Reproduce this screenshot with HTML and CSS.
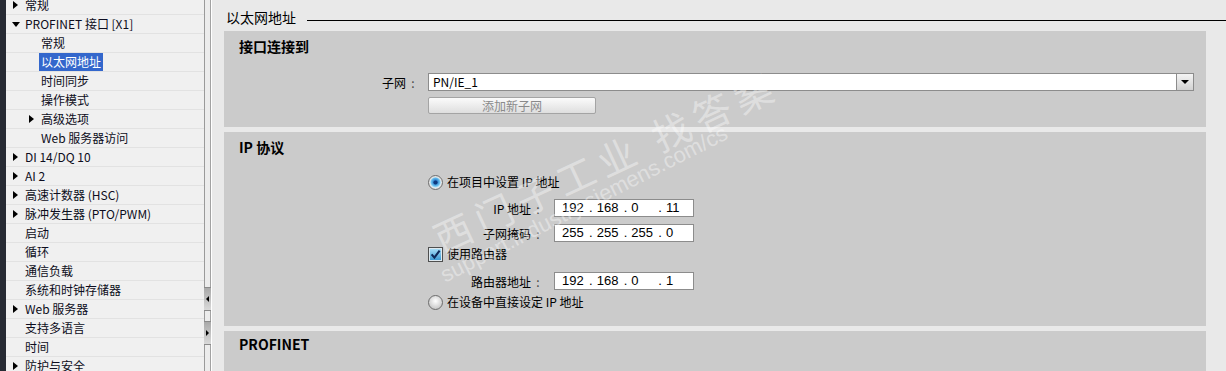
FILE: index.html
```html
<!DOCTYPE html>
<html lang="zh">
<head>
<meta charset="utf-8">
<title>以太网地址</title>
<link rel="stylesheet" href="styles.css">
</head>
<body>
<div class="app">
  <div class="edge"></div>
  <aside class="tree">
    <ul class="tree-list">
      <li class="row l0"><span class="tw closed"></span><span class="lbl">常规</span></li>
      <li class="row l0"><span class="tw open"></span><span class="lbl">PROFINET 接口 [X1]</span></li>
      <li class="row l1"><span class="tw"></span><span class="lbl">常规</span></li>
      <li class="row l1"><span class="tw"></span><span class="lbl sel">以太网地址</span></li>
      <li class="row l1"><span class="tw"></span><span class="lbl">时间同步</span></li>
      <li class="row l1"><span class="tw"></span><span class="lbl">操作模式</span></li>
      <li class="row l1"><span class="tw closed"></span><span class="lbl">高级选项</span></li>
      <li class="row l1"><span class="tw"></span><span class="lbl">Web 服务器访问</span></li>
      <li class="row l0"><span class="tw closed"></span><span class="lbl">DI 14/DQ 10</span></li>
      <li class="row l0"><span class="tw closed"></span><span class="lbl">AI 2</span></li>
      <li class="row l0"><span class="tw closed"></span><span class="lbl">高速计数器 (HSC)</span></li>
      <li class="row l0"><span class="tw closed"></span><span class="lbl">脉冲发生器 (PTO/PWM)</span></li>
      <li class="row l0"><span class="tw"></span><span class="lbl">启动</span></li>
      <li class="row l0"><span class="tw"></span><span class="lbl">循环</span></li>
      <li class="row l0"><span class="tw"></span><span class="lbl">通信负载</span></li>
      <li class="row l0"><span class="tw"></span><span class="lbl">系统和时钟存储器</span></li>
      <li class="row l0"><span class="tw closed"></span><span class="lbl">Web 服务器</span></li>
      <li class="row l0"><span class="tw"></span><span class="lbl">支持多语言</span></li>
      <li class="row l0"><span class="tw"></span><span class="lbl">时间</span></li>
      <li class="row l0"><span class="tw closed"></span><span class="lbl">防护与安全</span></li>
    </ul>
  </aside>
  <div class="splitter">
    <div class="split-btn"><span class="arr-l"></span></div>
    <div class="split-btn"><span class="arr-r"></span></div>
  </div>
  <main class="main">
    <div class="title-row"><h1 class="title">以太网地址</h1><span class="title-rule"></span></div>

    <section class="panel p1">
      <h2 class="panel-h">接口连接到</h2>
      <div class="field-row first">
        <label class="flabel">子网<span class="colon">:</span></label>
        <div class="combo"><span class="combo-val">PN/IE_1</span><span class="combo-btn"></span></div>
      </div>
      <div class="btn-row"><button class="btn" disabled>添加新子网</button></div>
    </section>

    <section class="panel p2">
      <h2 class="panel-h">IP 协议</h2>
      <div class="opts">
        <div class="opt">
          <svg class="radio" width="15" height="15" viewBox="0 0 15 15">
            <defs>
              <radialGradient id="rbl" cx="0.5" cy="0.45" r="0.55">
                <stop offset="0.25" stop-color="#2a74c4"/>
                <stop offset="0.7" stop-color="#66c0f0"/>
                <stop offset="1" stop-color="#d8f0fc"/>
              </radialGradient>
            </defs>
            <circle cx="7.5" cy="7.5" r="7" fill="#e4e4e4" stroke="#6c6c6c"/>
            <circle cx="7.5" cy="7.5" r="5.3" fill="url(#rbl)"/>
            <circle cx="7.5" cy="7.5" r="2.1" fill="#0e3a7e"/>
          </svg>
          <span>在项目中设置 IP 地址</span>
        </div>
        <div class="ip-row r-ip">
          <label class="iplabel">IP 地址<span class="colon">:</span></label>
          <div class="ip"><span class="seg">192</span><span class="dot">.</span><span class="seg">168</span><span class="dot">.</span><span class="seg">0</span><span class="dot">.</span><span class="seg">11</span></div>
        </div>
        <div class="ip-row r-mask">
          <label class="iplabel">子网掩码<span class="colon">:</span></label>
          <div class="ip"><span class="seg">255</span><span class="dot">.</span><span class="seg">255</span><span class="dot">.</span><span class="seg">255</span><span class="dot">.</span><span class="seg">0</span></div>
        </div>
        <div class="opt r-chk">
          <svg class="check" width="15" height="15" viewBox="0 0 15 15">
            <defs>
              <linearGradient id="cbg" x1="0" y1="0" x2="0" y2="1">
                <stop offset="0" stop-color="#a6dcf6"/>
                <stop offset="1" stop-color="#3d9ad4"/>
              </linearGradient>
            </defs>
            <rect x="0.5" y="0.5" width="14" height="14" fill="#dfe9ef" stroke="#4f4f4f"/>
            <rect x="2" y="2" width="11" height="11" fill="url(#cbg)"/>
            <path d="M3.6 7.4 L6.4 10.6 L11.6 3.6" fill="none" stroke="#0f2858" stroke-width="2.1"/>
          </svg>
          <span>使用路由器</span>
        </div>
        <div class="ip-row r-router">
          <label class="iplabel">路由器地址<span class="colon">:</span></label>
          <div class="ip"><span class="seg">192</span><span class="dot">.</span><span class="seg">168</span><span class="dot">.</span><span class="seg">0</span><span class="dot">.</span><span class="seg">1</span></div>
        </div>
        <div class="opt r-opt2">
          <svg class="radio" width="15" height="15" viewBox="0 0 15 15">
            <defs>
              <radialGradient id="rgy" cx="0.5" cy="0.4" r="0.6">
                <stop offset="0" stop-color="#ffffff"/>
                <stop offset="1" stop-color="#c4c4c4"/>
              </radialGradient>
            </defs>
            <circle cx="7.5" cy="7.5" r="7" fill="url(#rgy)" stroke="#6c6c6c"/>
          </svg>
          <span>在设备中直接设定 IP 地址</span>
        </div>
      </div>
    </section>

    <section class="panel p3">
      <h2 class="panel-h">PROFINET</h2>
    </section>

    <div class="wm wm-cn">西门子工业 找答案</div>
    <div class="wm wm-url">support.industry.siemens.com/cs</div>
  </main>
</div>
</body>
</html>
```

FILE: styles.css
```css
html, body {
  margin: 0;
  padding: 0;
}
body {
  font-family: "Noto Sans CJK SC", "Noto Sans", sans-serif;
  font-size: 12px;
  color: #000;
  background: #e9e9e9;
}
.app {
  display: flex;
  width: 1226px;
  height: 371px;
  overflow: hidden;
}
.edge {
  flex: none;
  width: 6px;
  background: #262a33;
}
.tree {
  flex: none;
  width: 198px;
  background: #f0f0f0;
  overflow: hidden;
}
.tree-list {
  list-style: none;
  margin: -4px 0 0;
  padding: 0;
}
.row {
  display: flex;
  align-items: center;
  height: 18px;
  line-height: 18px;
  border-bottom: 1px solid #e2e2e2;
  white-space: nowrap;
  color: #0d0d20;
}
.l0 { padding-left: 7px; }
.l1 { padding-left: 23px; }
.tw {
  flex: none;
  width: 12px;
  height: 18px;
  display: flex;
  align-items: center;
}
.tw.closed::before {
  content: "";
  border-left: 5px solid #000;
  border-top: 4.5px solid transparent;
  border-bottom: 4.5px solid transparent;
}
.tw.open::before {
  content: "";
  margin-left: -1px;
  border-top: 5px solid #000;
  border-left: 4px solid transparent;
  border-right: 4px solid transparent;
}
.lbl.sel {
  background: #3367cc;
  color: #fff;
  padding: 0 2px;
  margin-left: -2px;
}

.splitter {
  flex: none;
  width: 8px;
  background: linear-gradient(to right, #9a9a9a 0 1px, #ececec 1px 6px, #a2a2a2 6px 7px, #ffffff 7px 8px);
  display: flex;
  flex-direction: column;
}
.split-btn {
  width: 7px;
  height: 22px;
  border-top: 1px solid #8a8a8a;
  border-bottom: 1px solid #8a8a8a;
  background: linear-gradient(#a9a9a9, #d9d9d9);
  display: flex;
  align-items: center;
  justify-content: center;
}
.split-btn:first-child { margin-top: 287px; }
.split-btn + .split-btn { margin-top: 10px; }
.arr-l {
  border-right: 3px solid #000;
  border-top: 3px solid transparent;
  border-bottom: 3px solid transparent;
}
.arr-r {
  border-left: 3px solid #000;
  border-top: 3px solid transparent;
  border-bottom: 3px solid transparent;
}

.main {
  flex: 1;
  position: relative;
  background: #e9e9e9;
  overflow: hidden;
}
.title-row {
  display: flex;
  height: 24px;
  padding: 7px 0 0 14px;
}
.title {
  margin: 0;
  font-size: 14px;
  font-weight: normal;
  line-height: 20px;
}
.title-rule {
  flex: 1;
  height: 0;
  margin: 13px 0 0 11px;
  border-top: 1px solid #000;
}
.panel {
  margin: 0 20px 5px 12px;
  background: #cbcbcb;
  overflow: hidden;
}
.p1 { height: 96px; }
.p2 { height: 194px; }
.p3 { height: 60px; }
.panel-h {
  margin: 5px 0 0 15px;
  font-size: 14px;
  font-weight: bold;
  line-height: 20px;
}
.p3 .panel-h { margin-top: 3px; }

.colon {
  display: inline-block;
  width: 6px;
  margin-left: 4px;
  text-align: center;
  color: #444;
}
.field-row {
  display: flex;
  align-items: center;
  margin-top: 17px;
}
.flabel {
  width: 204px;
  box-sizing: border-box;
  padding-right: 12px;
  text-align: right;
}
.combo {
  display: flex;
  width: 766px;
  height: 18px;
  box-sizing: border-box;
  border: 1px solid #8c8c8c;
  background: #fff;
}
.combo-val {
  flex: 1;
  padding-left: 4px;
  line-height: 16px;
}
.combo-btn {
  width: 16px;
  border-left: 1px solid #8c8c8c;
  background: linear-gradient(#f4f4f4, #d2d2d2);
  display: flex;
  align-items: center;
  justify-content: center;
}
.combo-btn::before {
  content: "";
  border-top: 4px solid #000;
  border-left: 4px solid transparent;
  border-right: 4px solid transparent;
}
.btn-row {
  margin: 6px 0 0 204px;
}
.btn {
  display: block;
  width: 168px;
  height: 17px;
  padding: 0;
  border: 1px solid #a4a4a4;
  border-radius: 2px;
  background: linear-gradient(#fbfbfb, #dedede);
  color: #8a8a8a;
  font-family: inherit;
  font-size: 12px;
  line-height: 15px;
  text-align: center;
}

.opts {
  margin: 17px 0 0 204px;
}
.opt {
  display: flex;
  align-items: center;
  gap: 4px;
  height: 16px;
  line-height: 16px;
}
.opt svg { flex: none; display: block; }
.ip-row {
  display: flex;
  align-items: center;
  margin-top: 9px;
}
.r-mask { margin-top: 7px; }
.r-chk { margin-top: 4px; }
.r-router { margin-top: 10px; }
.r-opt2 { margin-top: 4px; }
.iplabel {
  width: 126px;
  box-sizing: border-box;
  padding-right: 13px;
  text-align: right;
}
.ip {
  display: flex;
  width: 140px;
  height: 18px;
  box-sizing: border-box;
  border: 1px solid #8c8c8c;
  background: #fff;
  padding-left: 7px;
  font-family: "Liberation Sans", "DejaVu Sans", sans-serif;
  font-size: 13px;
  line-height: 16px;
}
.seg { width: 28px; }
.dot { width: 8px; }

.wm {
  position: absolute;
  white-space: nowrap;
  color: rgba(255, 255, 255, 0.4);
  transform-origin: 0 100%;
  pointer-events: none;
}
.wm-cn {
  left: 232px;
  top: 218px;
  font-size: 38px;
  line-height: 40px;
  letter-spacing: 7px;
  transform: rotate(-25deg);
}
.wm-url {
  left: 236px;
  top: 262px;
  font-family: "Liberation Sans", sans-serif;
  font-size: 22px;
  line-height: 26px;
  transform: rotate(-27deg);
}
```
